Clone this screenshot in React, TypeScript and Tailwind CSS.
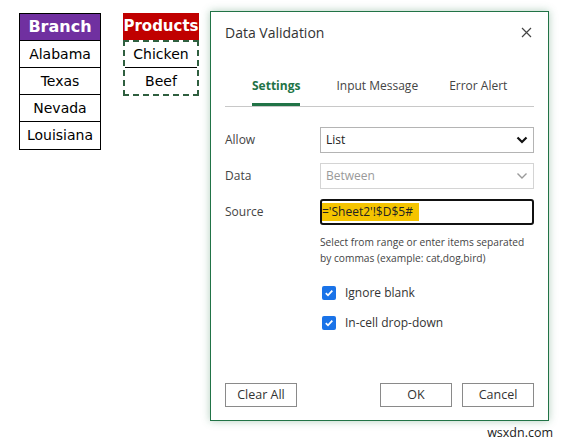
import React from "react";

const cellFont = { fontFamily: '"Comic Sans MS", "DejaVu Sans", sans-serif' };

function Chevron({ muted }: { muted?: boolean }) {
  return (
    <svg width="12" height="8" viewBox="0 0 12 8" className="shrink-0">
      <path
        d="M1.5 1.5 L6 6 L10.5 1.5"
        fill="none"
        stroke={muted ? "#9a9a9a" : "#111"}
        strokeWidth={muted ? 1.4 : 2.2}
      />
    </svg>
  );
}

function Check({ label }: { label: string }) {
  return (
    <div className="flex items-center h-[14px]">
      <div className="w-[14px] h-[14px] rounded-[2px] bg-[#1a73e8] flex items-center justify-center ml-[2px]">
        <svg width="10" height="10" viewBox="0 0 10 10">
          <path d="M1.8 5.2 L4 7.3 L8.3 2.6" fill="none" stroke="white" strokeWidth="1.8" />
        </svg>
      </div>
      <span className="ml-[9px] text-[12px] text-[#333]">{label}</span>
    </div>
  );
}

export default function App() {
  const branches = ["Alabama", "Texas", "Nevada", "Louisiana"];
  const products = ["Chicken", "Beef"];

  return (
    <div className="w-[565px] h-[442px] bg-white overflow-hidden" style={{ fontFamily: '"Open Sans", "Noto Sans", sans-serif' }}>
      <div className="flex items-start pt-[11px] pl-[19px]">
        {/* Branch table */}
        <div className="mt-[2px] w-[82px] border border-black text-[14px] text-black" style={cellFont}>
          <div className="h-[27px] bg-[#7030a0] text-white font-bold text-[16px] flex items-center justify-center border-b border-black">
            Branch
          </div>
          {branches.map((b, i) => (
            <div
              key={b}
              className={`h-[27px] flex items-center justify-center ${i < branches.length - 1 ? "border-b border-black" : ""}`}
            >
              {b}
            </div>
          ))}
        </div>

        {/* Products table */}
        <div className="mt-[2px] ml-[22px] w-[76px] text-[14px] text-black" style={cellFont}>
          <div className="h-[27px] bg-[#c00000] text-white font-bold text-[15px] flex items-center justify-center">
            Products
          </div>
          <div className="border-2 border-dashed border-[#2f5f3f]">
            {products.map((p, i) => (
              <div
                key={p}
                className={`h-[26px] flex items-center justify-center ${i === 0 ? "border-b border-black" : ""}`}
              >
                {p}
              </div>
            ))}
          </div>
        </div>

        {/* Dialog */}
        <div className="ml-[11px] w-[339px] h-[410px] border border-[#217346] bg-white shadow-[0_0_8px_rgba(33,115,70,0.35)] flex flex-col">
          <div className="h-[40px] flex items-center justify-between px-[14px] pr-[16px]">
            <span className="text-[14px] text-[#333]">Data Validation</span>
            <svg width="11" height="11" viewBox="0 0 11 11">
              <path d="M1 1 L10 10 M10 1 L1 10" stroke="#444" strokeWidth="1.2" />
            </svg>
          </div>

          <div className="mx-[14px] mt-[25px] border-b border-[#c8c8c8] flex pl-[27px] text-[12px]">
            <div className="flex flex-col">
              <span className="h-[18px] leading-[18px] font-bold text-[#217346]">Settings</span>
              <div className="mt-[8px] h-[3px] bg-[#217346]" />
            </div>
            <span className="ml-[36px] h-[18px] leading-[18px] text-[#444]">Input Message</span>
            <span className="ml-[31px] h-[18px] leading-[18px] text-[#444]">Error Alert</span>
          </div>

          <div className="px-[14px] mt-[20px] flex flex-col gap-[10px] text-[12px] text-[#444]">
            <div className="flex items-center">
              <span className="w-[95px]">Allow</span>
              <div className="w-[214px] h-[26px] border border-[#b4b4b4] flex items-center justify-between pl-[5px] pr-[5px] text-[#222]">
                <span>List</span>
                <Chevron />
              </div>
            </div>
            <div className="flex items-center">
              <span className="w-[95px]">Data</span>
              <div className="w-[214px] h-[26px] border border-[#d4d4d4] flex items-center justify-between pl-[5px] pr-[5px] text-[#9a9a9a]">
                <span>Between</span>
                <Chevron muted />
              </div>
            </div>
            <div className="flex items-center">
              <span className="w-[95px]">Source</span>
              <div className="w-[214px] h-[26px] border-2 border-[#111] rounded-[3px] flex items-center">
                <span className="bg-[#f5c400] text-[#222] h-[18px] leading-[18px] pr-[6px] text-[12px]">='Sheet2'!$D$5#</span>
              </div>
            </div>
          </div>

          <div className="ml-[109px] mt-[9px] text-[10.2px] leading-[16px] text-[#444]">
            <div>Select from range or enter items separated</div>
            <div>by commas (example: cat,dog,bird)</div>
          </div>

          <div className="ml-[109px] mt-[20px] flex flex-col gap-[16px]">
            <Check label="Ignore blank" />
            <Check label="In-cell drop-down" />
          </div>

          <div className="flex-1" />

          <div className="flex items-center px-[14px] pb-[13px] text-[12.5px] text-[#333]">
            <button className="w-[72px] h-[24px] border border-[#8a8a8a] bg-white">Clear All</button>
            <div className="flex-1" />
            <button className="w-[72px] h-[24px] border border-[#8a8a8a] bg-white">OK</button>
            <button className="ml-[10px] w-[72px] h-[24px] border border-[#8a8a8a] bg-white">Cancel</button>
          </div>
        </div>
      </div>

      <div className="flex justify-end pr-[12px] mt-[3px] text-[12.5px] text-[#222]">wsxdn.com</div>
    </div>
  );
}
